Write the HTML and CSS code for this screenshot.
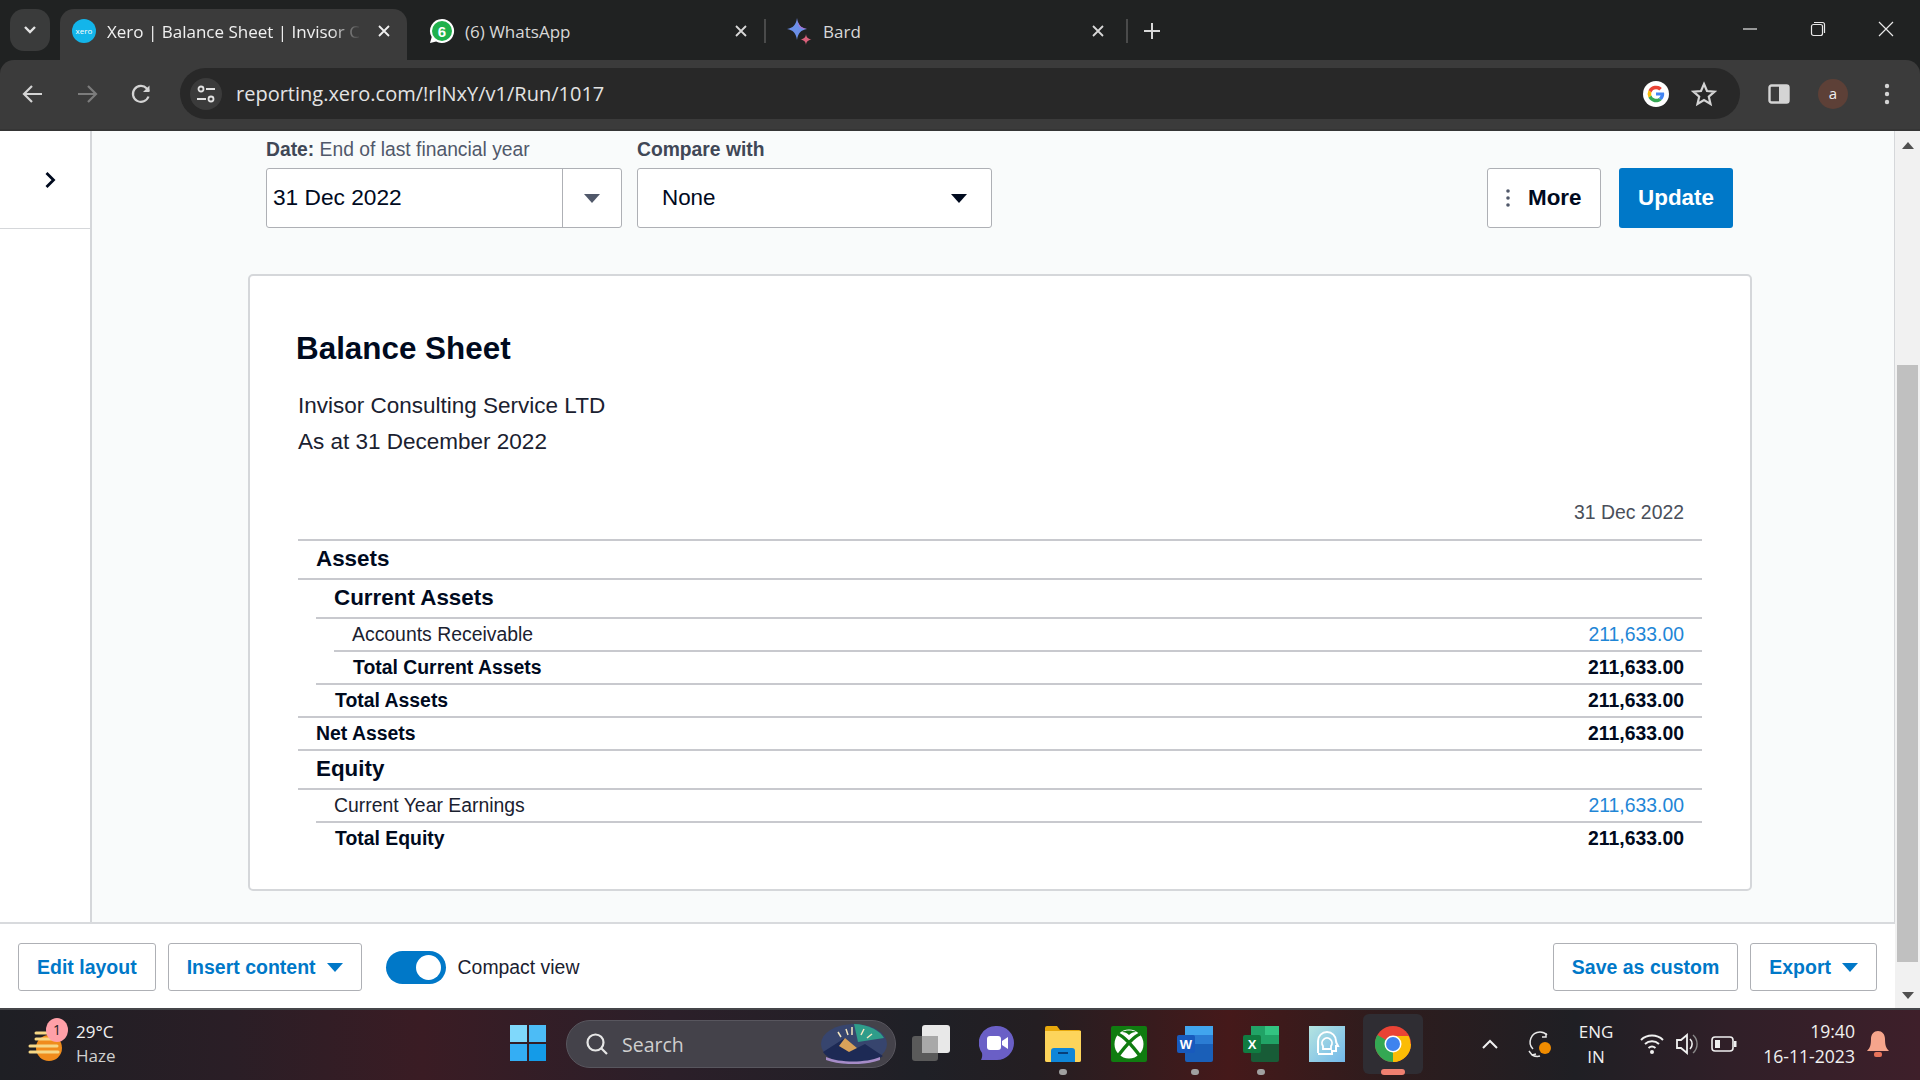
FILE: index.html
```html
<!DOCTYPE html>
<html lang="en">
<head>
    <meta charset="UTF-8">
    <title>Xero | Balance Sheet</title>
    <link rel="stylesheet" href="styles.css">
</head>
<body>
    <!-- browser tabs -->
    <div class="tabstrip">
        <div class="tab-search"><svg width="14" height="10" viewBox="0 0 14 10"><path d="M2 2l5 5 5-5" fill="none" stroke="#e3e3e3" stroke-width="2.4"/></svg></div>
        <div class="tab tab-active">
            <span class="favicon xero-icon">xero</span>
            <span class="tab-title tab-fade">Xero | Balance Sheet | Invisor C</span>
            <svg class="tab-close" width="14" height="14" viewBox="0 0 14 14"><path d="M2 2l10 10M12 2L2 12" stroke="#f0f0f0" stroke-width="1.8"/></svg>
        </div>
        <div class="tab tab-wa">
            <svg class="favicon" width="26" height="26" viewBox="0 0 26 26"><path d="M13 1a12 12 0 0 0-10.300 18.100L1 25l6.100-1.600A12 12 0 1 0 13 1z" fill="#fff"/><circle cx="13" cy="13" r="10" fill="#1fb14c"/><text x="13" y="18.500" class="wa-count">6</text></svg>
            <span class="tab-title">(6) WhatsApp</span>
            <svg class="tab-close" width="14" height="14" viewBox="0 0 14 14"><path d="M2 2l10 10M12 2L2 12" stroke="#d8d8d8" stroke-width="1.800"/></svg>
        </div>
        <div class="tab-sep"></div>
        <div class="tab tab-bard">
            <svg class="favicon" width="26" height="28" viewBox="0 0 26 28"><path d="M11 1c1 7 4 10 10 11-6 1-9 4-10 11-1-7-4-10-10-11 6-1 9-4 10-11z" fill="#6b8fe8"/><path d="M11 1c1 7 4 10 10 11-6 0-9-1-10-11z" fill="#b36fd0"/><path d="M20 17c.4 3.400 1.800 4.800 5.500 5.500-3.700.7-5.100 2.100-5.500 5.500-.4-3.400-1.800-4.800-5.500-5.500 3.700-.7 5.100-2.100 5.500-5.500z" fill="#d9607a"/></svg>
            <span class="tab-title">Bard</span>
            <svg class="tab-close" width="14" height="14" viewBox="0 0 14 14"><path d="M2 2l10 10M12 2L2 12" stroke="#d8d8d8" stroke-width="1.800"/></svg>
        </div>
        <div class="tab-sep"></div>
        <svg class="tab-new" width="18" height="18" viewBox="0 0 18 18"><path d="M9 1v16M1 9h16" stroke="#d8d8d8" stroke-width="2"/></svg>
        <div class="win-controls">
            <svg width="16" height="16" viewBox="0 0 16 16"><path d="M1 8h14" stroke="#e8e8e8" stroke-width="1.200"/></svg>
            <svg width="16" height="16" viewBox="0 0 16 16"><rect x="1.500" y="3.500" width="11" height="11" rx="2" fill="none" stroke="#e8e8e8" stroke-width="1.200"/><path d="M4 1.500h8.500a2 2 0 0 1 2 2V12" fill="none" stroke="#e8e8e8" stroke-width="1.200"/></svg>
            <svg width="16" height="16" viewBox="0 0 16 16"><path d="M1 1l14 14M15 1L1 15" stroke="#e8e8e8" stroke-width="1.200"/></svg>
        </div>
    </div>

    <!-- toolbar -->
    <div class="toolbar">
        <svg class="nav-icon" width="22" height="22" viewBox="0 0 22 22"><path d="M20 11H3M10 3l-8 8 8 8" fill="none" stroke="#d4d4d4" stroke-width="2.200"/></svg>
        <svg class="nav-icon" width="22" height="22" viewBox="0 0 22 22"><path d="M2 11h17M12 3l8 8-8 8" fill="none" stroke="#7c7c7c" stroke-width="2.200"/></svg>
        <svg class="nav-icon" width="22" height="22" viewBox="0 0 22 22"><path d="M18.500 13.500a8 8 0 1 1-1.700-8.100L19 8" fill="none" stroke="#d4d4d4" stroke-width="2.200"/><path d="M19.500 2.500v6.500H13z" fill="#d4d4d4"/></svg>
        <div class="omnibox">
            <div class="site-info"><svg width="20" height="20" viewBox="0 0 20 20"><circle cx="5" cy="5" r="2.500" fill="none" stroke="#e3e3e3" stroke-width="1.800"/><path d="M10 5h9M1 15h9" stroke="#e3e3e3" stroke-width="1.800"/><circle cx="15" cy="15" r="2.500" fill="none" stroke="#e3e3e3" stroke-width="1.800"/></svg></div>
            <span class="url">reporting.xero.com/!rlNxY/v1/Run/1017</span>
            <svg class="g-icon" width="26" height="26" viewBox="0 0 26 26"><circle cx="13" cy="13" r="13" fill="#fff"/><path d="M13 8.200a4.800 4.800 0 0 1 3.300 1.300l2.500-2.500A8.400 8.400 0 0 0 5.500 9.300l2.900 2.200A5 5 0 0 1 13 8.200z" fill="#ea4335"/><path d="M5.500 9.300a8.400 8.400 0 0 0 0 7.400l2.900-2.200a5 5 0 0 1 0-3z" fill="#fbbc05"/><path d="M5.500 16.700A8.400 8.400 0 0 0 18.700 19l-2.800-2.100a5 5 0 0 1-7.500-2.400z" fill="#34a853"/><path d="M21.200 13c0-.6-.1-1.100-.2-1.600h-8v3.200h4.600a4 4 0 0 1-1.700 2.300l2.800 2.100c1.600-1.500 2.500-3.600 2.500-6z" fill="#4285f4"/></svg>
            <svg class="star-icon" width="26" height="26" viewBox="0 0 26 26"><path d="M13 3l3 7 7.500.7-5.700 5 1.700 7.300-6.500-3.900L6.500 23l1.700-7.300-5.700-5L10 10z" fill="none" stroke="#d4d4d4" stroke-width="2.200"/></svg>
        </div>
        <svg class="panel-icon" width="22" height="22" viewBox="0 0 22 22"><rect x="1.500" y="2.500" width="19" height="17" rx="2" fill="none" stroke="#d4d4d4" stroke-width="2.400"/><rect x="11" y="2.500" width="9.500" height="17" fill="#d4d4d4"/></svg>
        <span class="avatar">a</span>
        <svg class="menu-icon" width="6" height="22" viewBox="0 0 6 22"><circle cx="3" cy="3" r="2.200" fill="#d4d4d4"/><circle cx="3" cy="11" r="2.200" fill="#d4d4d4"/><circle cx="3" cy="19" r="2.200" fill="#d4d4d4"/></svg>
    </div>

    <!-- page -->
    <div class="viewport">
        <div class="page">
            <div class="page-body">
                <aside class="sidebar">
                    <div class="sidebar-toggle"><svg width="12" height="18" viewBox="0 0 12 18"><path d="M2.500 2l7 7-7 7" fill="none" stroke="#000a1e" stroke-width="2.800"/></svg></div>
                </aside>
                <main class="main">
                    <div class="filters">
                        <div class="field field-date">
                            <div class="field-label"><b>Date:</b> End of last financial year</div>
                            <div class="select-box">
                                <span class="date-value">31 Dec 2022</span>
                                <span class="date-caret"><i class="caret caret-grey"></i></span>
                            </div>
                        </div>
                        <div class="field field-compare">
                            <div class="field-label"><b>Compare with</b></div>
                            <div class="select-box compare-box">
                                <span>None</span>
                                <i class="caret caret-dark"></i>
                            </div>
                        </div>
                        <div class="filter-actions">
                            <button class="btn-more"><svg width="4" height="20" viewBox="0 0 4 20"><circle cx="2" cy="3" r="1.800" fill="#50586a"/><circle cx="2" cy="10" r="1.800" fill="#50586a"/><circle cx="2" cy="17" r="1.800" fill="#50586a"/></svg>More</button>
                            <button class="btn-update">Update</button>
                        </div>
                    </div>

                    <section class="report">
                        <h1>Balance Sheet</h1>
                        <p class="report-sub">Invisor Consulting Service LTD</p>
                        <p class="report-sub">As at 31 December 2022</p>
                        <div class="col-head">31 Dec 2022</div>
                        <div class="row head line0 text1"><span>Assets</span></div>
                        <div class="row head line0 text2"><span>Current Assets</span></div>
                        <div class="row line1 text2"><span>Accounts Receivable</span><a>211,633.00</a></div>
                        <div class="row total line2 text1"><span>Total Current Assets</span><span>211,633.00</span></div>
                        <div class="row total line1 text1"><span>Total Assets</span><span>211,633.00</span></div>
                        <div class="row total line0 text1"><span>Net Assets</span><span>211,633.00</span></div>
                        <div class="row head line0 text1"><span>Equity</span></div>
                        <div class="row line0 text2"><span>Current Year Earnings</span><a>211,633.00</a></div>
                        <div class="row total line1 text1"><span>Total Equity</span><span>211,633.00</span></div>
                    </section>
                </main>
            </div>
            <footer class="actions">
                <button class="btn-link">Edit layout</button>
                <button class="btn-link">Insert content<i class="caret caret-blue"></i></button>
                <div class="switch"><span class="switch-knob"></span></div>
                <span class="switch-label">Compact view</span>
                <button class="btn-link btn-save">Save as custom</button>
                <button class="btn-link">Export<i class="caret caret-blue"></i></button>
            </footer>
        </div>
        <div class="scrollbar">
            <i class="arrow-up"></i>
            <div class="scroll-thumb"></div>
            <i class="arrow-down"></i>
        </div>
    </div>

    <!-- windows taskbar -->
    <div class="taskbar">
        <div class="weather">
            <div class="weather-icon">
                <svg width="38" height="46" viewBox="0 0 38 46"><circle cx="22" cy="23" r="13" fill="#f08c1c"/><path d="M9 8h12M9 14h18M3 21h27M3 27h28" stroke="#f6d785" stroke-width="3" stroke-linecap="round"/></svg>
                <span class="weather-badge">1</span>
            </div>
            <div class="weather-text"><div>29°C</div><div class="weather-sub">Haze</div></div>
        </div>
        <svg class="win-logo" width="36" height="36" viewBox="0 0 36 36"><rect width="17" height="17" fill="#7fd8fb"/><rect x="19" width="17" height="17" fill="#4cbcf6"/><rect y="19" width="17" height="17" fill="#34aef4"/><rect x="19" y="19" width="17" height="17" fill="#149be8"/></svg>
        <div class="searchbox">
            <svg width="24" height="24" viewBox="0 0 24 24"><circle cx="10.500" cy="10.500" r="8" fill="none" stroke="#e6e6e6" stroke-width="2.200"/><path d="M16 16l6 6" stroke="#e6e6e6" stroke-width="2.200"/></svg>
            <span class="search-text">Search</span>
            <svg class="search-art" width="70" height="40" viewBox="0 0 70 40"><ellipse cx="36" cy="20" rx="33" ry="20" fill="#37456e"/><path d="M36 0a33 20 0 0 1 30 14L40 18z" fill="#2f9d8a"/><path d="M5 28l22-14 12 10 8-4 18 12c-8 6-20 8-30 8S10 36 5 28z" fill="#1d2a55"/><path d="M27 14l12 10-8 4-10-6z" fill="#d9a25a"/><path d="M8 33c14 6 40 6 54 0v3c-16 6-40 5-54 0z" fill="#a68cc8"/><path d="M20 8l3 5M34 3v8M46 5l-3 6M28 5l2 6M54 10l-5 4" stroke="#f3e6c0" stroke-width="1.500"/></svg>
        </div>
        <svg class="taskview" width="38" height="36" viewBox="0 0 38 36"><rect y="11" width="26" height="25" rx="3" fill="#5a5a5a"/><rect x="10" width="28" height="28" rx="3" fill="#e8e8e8"/><rect x="10" y="11" width="16" height="17" fill="#a8a8a8"/></svg>
        <div class="apps">
            <div class="app"><svg width="36" height="38" viewBox="0 0 36 38"><path d="M18 1a17 17 0 0 1 17 17 17 17 0 0 1-17 17H2c1-2 1.500-4 1-7A17 17 0 0 1 18 1z" fill="#6a5fc6"/><rect x="8" y="11" width="14" height="14" rx="3" fill="#fff"/><path d="M23 16l6-4v12l-6-4z" fill="#fff"/></svg></div>
            <div class="app running"><svg width="36" height="36" viewBox="0 0 36 36"><path d="M0 2a2 2 0 0 1 2-2h10l3 4h19a2 2 0 0 1 2 2v28a2 2 0 0 1-2 2H2a2 2 0 0 1-2-2z" fill="#e8a80c"/><path d="M0 5h36v29a2 2 0 0 1-2 2H2a2 2 0 0 1-2-2z" fill="#fdd45b"/><path d="M6 25a3 3 0 0 1 3-3h18a3 3 0 0 1 3 3v11H6z" fill="#0f86d8"/><path d="M13 27h10" stroke="#073f7a" stroke-width="2"/></svg></div>
            <div class="app"><svg width="36" height="36" viewBox="0 0 36 36"><rect width="36" height="36" rx="2" fill="#107c10"/><circle cx="18" cy="18" r="14.500" fill="#fff"/><path d="M7 8c7 3 16 14 22 22M29 8C22 11 13 22 7 30" fill="none" stroke="#107c10" stroke-width="3.500"/><path d="M11 6c3 0 5 1 7 3 2-2 4-3 7-3-3-2-11-2-14 0z" fill="#107c10"/></svg></div>
            <div class="app running"><svg width="36" height="36" viewBox="0 0 36 36"><rect x="8" width="28" height="36" rx="2" fill="#1a5fb8"/><rect x="8" width="28" height="9" fill="#41a5ee"/><rect x="8" y="9" width="28" height="9" fill="#2b7cd3"/><rect y="9" width="18" height="18" rx="2" fill="#185abd"/><text x="9" y="23" class="doc-letter">W</text></svg></div>
            <div class="app running"><svg width="36" height="36" viewBox="0 0 36 36"><rect x="8" width="28" height="36" rx="2" fill="#185c37"/><rect x="22" width="14" height="9" fill="#33c481"/><rect x="8" width="14" height="9" fill="#21a366"/><rect x="8" y="9" width="28" height="9" fill="#21a366"/><rect y="9" width="18" height="18" rx="2" fill="#107c41"/><text x="9" y="23" class="doc-letter">X</text></svg></div>
            <div class="app"><svg width="36" height="36" viewBox="0 0 36 36"><defs><linearGradient id="gpt" x1="0" y1="0" x2="1" y2="1"><stop offset="0" stop-color="#b5e4e0"/><stop offset="1" stop-color="#72b8ea"/></linearGradient></defs><rect width="36" height="36" fill="url(#gpt)"/><path d="M9 27V15a9 9 0 0 1 18 0c0 2 1 3 2 5h-2v5h-4v3H9" fill="none" stroke="#fff" stroke-width="2"/><path d="M14 20a5 5 0 1 1 8 0v3h-8z" fill="none" stroke="#fff" stroke-width="1.800"/></svg></div>
            <div class="app app-active"><svg width="36" height="36" viewBox="0 0 36 36"><circle cx="18" cy="18" r="18" fill="#ea4335"/><path d="M18 18L2.400 9A18 18 0 0 0 18 36l8-15z" fill="#34a853"/><path d="M18 18h18a18 18 0 0 1-18 18z" fill="#fbbc05"/><path d="M18 10h15.600A18 18 0 0 1 18 36l8-14z" fill="#fbbc05"/><circle cx="18" cy="18" r="8.500" fill="#fff"/><circle cx="18" cy="18" r="7" fill="#3f83ee"/></svg></div>
        </div>
        <div class="tray">
            <svg class="tray-chevron" width="20" height="12" viewBox="0 0 20 12"><path d="M3 10l7-7 7 7" fill="none" stroke="#f0f0f0" stroke-width="2"/></svg>
            <svg class="tray-sync" width="28" height="30" viewBox="0 0 28 30"><path d="M7 20A10 10 0 0 1 14 3c3 0 5 1 7 3M20 4v4h-4" fill="none" stroke="#e8e8e8" stroke-width="1.500"/><path d="M3 22l3 4 4-1M6 26c2 1 5 2 8 1" fill="none" stroke="#e8e8e8" stroke-width="1.500"/><circle cx="19" cy="19" r="6" fill="#f08c00"/></svg>
            <div class="tray-lang"><div>ENG</div><div>IN</div></div>
            <svg class="tray-wifi" width="24" height="22" viewBox="0 0 24 22"><path d="M1 7a16 16 0 0 1 22 0M5 11a10.500 10.500 0 0 1 14 0M8.500 15a5.500 5.500 0 0 1 7 0" fill="none" stroke="#f0f0f0" stroke-width="2"/><circle cx="12" cy="19" r="2" fill="#f0f0f0"/></svg>
            <svg class="tray-vol" width="26" height="26" viewBox="0 0 26 26"><path d="M2 9h4l6-5v18l-6-5H2z" fill="none" stroke="#f0f0f0" stroke-width="1.800"/><path d="M15 8a7 7 0 0 1 0 10" fill="none" stroke="#f0f0f0" stroke-width="1.600"/><path d="M18 4a12 12 0 0 1 0 18" fill="none" stroke="#8a8a8a" stroke-width="1.400"/></svg>
            <svg class="tray-batt" width="26" height="16" viewBox="0 0 26 16"><rect x="1" y="1" width="21" height="14" rx="3" fill="none" stroke="#f0f0f0" stroke-width="1.600"/><rect x="4" y="4" width="5" height="8" fill="#f0f0f0"/><rect x="23" y="5" width="2.500" height="6" fill="#f0f0f0"/></svg>
            <div class="clock"><div>19:40</div><div>16-11-2023</div></div>
            <svg class="tray-bell" width="24" height="28" viewBox="0 0 24 28"><path d="M12 1c-4 0-7 3-7 8 0 6-1 9-4 12h22c-3-3-4-6-4-12 0-5-3-8-7-8z" fill="#f6a58c"/><rect x="8" y="22" width="8" height="5" rx="2" fill="#e8735a"/></svg>
        </div>
    </div>
</body>
</html>
```

FILE: styles.css
```css
* {
    box-sizing: border-box;
}
html, body {
    margin: 0;
    width: 1920px;
    height: 1080px;
    overflow: hidden;
}
body {
    font-family: "Liberation Sans", Arial, sans-serif;
    color: #000a1e;
    background: #202222;
}
svg {
    flex: none;
    display: block;
}

/* tabs */
.tabstrip {
    height: 60px;
    background: #202222;
    display: flex;
    align-items: flex-end;
    font-family: "Open Sans", sans-serif;
    font-size: 17px;
    color: #d8d8d8;
}
.tab-search {
    width: 40px;
    height: 42px;
    margin: 0 10px 9px 10px;
    background: #3a3b3b;
    border-radius: 14px;
    display: flex;
    align-items: center;
    justify-content: center;
}
.tab {
    width: 347px;
    height: 51px;
    padding: 0 14px 7px 12px;
    display: flex;
    align-items: center;
    border-radius: 14px 14px 0 0;
}
.tab-active {
    background: #3b3b3b;
    color: #f0f0f0;
}
.tab-wa {
    width: 355px;
    margin-left: 2px;
    padding-left: 20px;
}
.tab-wa .favicon {
    margin-right: 10px;
}
.tab-bard {
    width: 355px;
    margin-right: 5px;
    padding-left: 20px;
}
.favicon {
    width: 26px;
    margin-right: 11px;
}
.xero-icon {
    height: 24px;
    width: 24px;
    margin-right: 11px;
    border-radius: 50%;
    background: #13b5ea;
    color: #fff;
    font-size: 8px;
    line-height: 24px;
    text-align: center;
}
.wa-count {
    font-family: "Liberation Sans", sans-serif;
    font-size: 15px;
    font-weight: bold;
    fill: #fff;
    text-anchor: middle;
}
.tab-title {
    flex: 1;
    white-space: nowrap;
    overflow: hidden;
}
.tab-fade {
    margin-right: 16px;
    -webkit-mask-image: linear-gradient(to right, #000 88%, transparent 100%);
    mask-image: linear-gradient(to right, #000 88%, transparent 100%);
}
.tab-close {
    margin-right: 2px;
}
.tab-sep {
    width: 2px;
    height: 24px;
    margin-bottom: 17px;
    background: #4a4b4b;
}
.tab-new {
    margin: 0 0 20px 15px;
}
.win-controls {
    margin-left: auto;
    display: flex;
    gap: 52px;
    padding-right: 26px;
    margin-bottom: 23px;
}

/* toolbar */
.toolbar {
    height: 71px;
    background: #3b3b3b;
    border-bottom: 2px solid #353535;
    border-radius: 14px 14px 0 0;
    display: flex;
    align-items: center;
    padding: 0 0 2px 22px;
}
.nav-icon {
    margin-right: 32px;
}
.nav-icon:nth-child(3) {
    margin-right: 28px;
}
.omnibox {
    width: 1560px;
    height: 51px;
    background: #282828;
    border-radius: 26px;
    display: flex;
    align-items: center;
    padding: 0 23px 0 10px;
}
.site-info {
    width: 32px;
    height: 32px;
    margin-right: 14px;
    background: #3b3b3b;
    border-radius: 50%;
    display: flex;
    align-items: center;
    justify-content: center;
}
.url {
    font-family: "Open Sans", sans-serif;
    font-size: 20px;
    color: #e3e3e3;
}
.g-icon {
    margin-left: auto;
}
.star-icon {
    margin-left: 22px;
}
.panel-icon {
    margin-left: 28px;
}
.avatar {
    width: 30px;
    height: 30px;
    margin-left: 28px;
    border-radius: 50%;
    background: #5d4037;
    color: #f0f0f0;
    font-family: "Open Sans", sans-serif;
    font-size: 15px;
    line-height: 28px;
    text-align: center;
}
.menu-icon {
    margin-left: 36px;
}

/* page */
.viewport {
    height: 877px;
    display: flex;
    background: #fff;
}
.page {
    width: 1895px;
    display: flex;
    flex-direction: column;
}
.page-body {
    height: 793px;
    display: flex;
    border-bottom: 2px solid #d8dadd;
}
.sidebar {
    width: 92px;
    background: #fff;
    border-right: 2px solid #d5d7da;
}
.sidebar-toggle {
    height: 98px;
    padding-left: 10px;
    border-bottom: 1px solid #d5d7da;
    display: flex;
    align-items: center;
    justify-content: center;
}
.main {
    width: 1803px;
    background: #f9fbfb;
    border-right: 1px solid #d5d7da;
    padding: 7px 0 0 0;
}
.filters {
    display: flex;
    align-items: flex-end;
    padding: 0 161px 0 174px;
}
.field-label {
    font-size: 19.3px;
    line-height: 24px;
    margin-bottom: 6px;
    color: #50586a;
}
.field-label b {
    color: #404756;
}
.field-date {
    width: 356px;
}
.field-compare {
    width: 355px;
    margin-left: 15px;
}
.select-box {
    height: 60px;
    background: #fff;
    border: 1px solid #aeb0b5;
    border-radius: 3px;
    display: flex;
    align-items: center;
    font-size: 22.4px;
}
.date-value {
    flex: 1;
    padding: 0 0 2px 6px;
    font-size: 22.7px;
}
.date-caret {
    width: 59px;
    height: 100%;
    border-left: 1px solid #aeb0b5;
    display: flex;
    align-items: center;
    justify-content: center;
}
.compare-box {
    justify-content: space-between;
    padding: 0 24px 0 24px;
}
.caret {
    display: inline-block;
    border-left: 8px solid transparent;
    border-right: 8px solid transparent;
    border-top: 9px solid;
}
.caret-grey {
    color: #50586a;
}
.caret-dark {
    color: #000a1e;
}
.caret-blue {
    color: #0078c8;
    margin-left: 11px;
    vertical-align: 2px;
}
.filter-actions {
    margin-left: auto;
    display: flex;
    gap: 18px;
}
button {
    font-family: "Liberation Sans", Arial, sans-serif;
    font-weight: bold;
    cursor: pointer;
}
.btn-more {
    width: 114px;
    height: 60px;
    background: #fff;
    border: 1px solid #aeb0b5;
    border-radius: 3px;
    color: #000a1e;
    font-size: 22.4px;
    display: flex;
    align-items: center;
    gap: 18px;
    padding: 0 0 0 18px;
}
.btn-update {
    width: 114px;
    height: 60px;
    background: #0078c8;
    border: none;
    border-radius: 3px;
    color: #fff;
    font-size: 22.4px;
}

/* report card */
.report {
    width: 1504px;
    height: 617px;
    margin: 46px 0 0 156px;
    padding: 53px 48px 0 48px;
    background: #fff;
    border: 2px solid #d5d7da;
    border-radius: 5px;
}
.report h1 {
    margin: 0 0 19px -2px;
    font-size: 31.4px;
    line-height: 40px;
}
.report-sub {
    margin: 0;
    font-size: 22.5px;
    line-height: 36px;
    color: #1a2130;
}
.col-head {
    height: 79px;
    padding: 40px 18px 0 0;
    font-size: 19.4px;
    line-height: 24px;
    text-align: right;
    color: #4a4f5a;
}
.row {
    height: 33px;
    display: flex;
    align-items: center;
    justify-content: space-between;
    padding-right: 18px;
    border-top: 2px solid #c8c9ce;
    font-size: 19.4px;
    color: #1a2130;
}
.row a {
    color: #1f86d6;
}
.head {
    height: 39px;
    padding-bottom: 2px;
    font-size: 22.4px;
    font-weight: bold;
    color: #000a1e;
}
.total {
    font-weight: bold;
    color: #000a1e;
}
.line1 {
    margin-left: 18px;
}
.line2 {
    margin-left: 36px;
}
.text1 {
    padding-left: 18px;
}
.text2 {
    padding-left: 36px;
}
.line1.text1, .line2.text1 {
    padding-left: 19px;
}

/* footer buttons */
.actions {
    height: 84px;
    padding: 2px 18px 0 18px;
    background: #fff;
    display: flex;
    align-items: center;
}
.btn-link {
    height: 48px;
    padding: 0 18px;
    background: #fff;
    border: 1px solid #aeb0b5;
    border-radius: 3px;
    color: #0078c8;
    font-size: 19.5px;
    margin-right: 12px;
    white-space: nowrap;
}
.switch {
    width: 60px;
    height: 33px;
    margin-left: 12px;
    background: #0078c8;
    border-radius: 17px;
    padding: 4px 0 0 30px;
}
.switch-knob {
    display: block;
    width: 25px;
    height: 25px;
    background: #fff;
    border-radius: 50%;
}
.switch-label {
    margin-left: 12px;
    font-size: 19.4px;
    color: #1a2130;
}
.btn-save {
    margin-left: auto;
}
.actions .btn-link:last-child {
    margin-right: 0;
}
.scrollbar {
    width: 25px;
    background: #f1f1f1;
    display: flex;
    flex-direction: column;
    align-items: center;
}
.arrow-up, .arrow-down {
    border-left: 6px solid transparent;
    border-right: 6px solid transparent;
}
.arrow-up {
    border-bottom: 7px solid #505050;
    margin-top: 11px;
}
.arrow-down {
    border-top: 7px solid #505050;
    margin-top: 30px;
}
.scroll-thumb {
    width: 21px;
    height: 597px;
    margin-top: 216px;
    background: #c0c0c0;
}

/* taskbar */
.taskbar {
    height: 72px;
    padding-bottom: 2px;
    border-top: 2px solid #45464a;
    background: linear-gradient(to right, #1e1f24 0%, #2a1e26 12%, #3a1c24 22%, #2b1f29 35%, #1f2026 48%, #241e22 54%, #45191a 64%, #2e1c1d 72%, #1f1f24 82%, #301f28 90%, #3e1f2a 100%);
    display: flex;
    align-items: center;
    font-family: "Open Sans", sans-serif;
    color: #f0f0f0;
    font-size: 17px;
}
.weather {
    width: 510px;
    display: flex;
    align-items: center;
    padding-left: 27px;
}
.weather-icon {
    position: relative;
    width: 38px;
    height: 46px;
    margin-top: 8px;
}
.weather-badge {
    position: absolute;
    left: 19px;
    top: -7px;
    width: 22px;
    height: 24px;
    border-radius: 50%;
    background: #ffa0a8;
    color: #222;
    font-size: 14px;
    line-height: 24px;
    text-align: center;
}
.weather-text {
    margin-left: 11px;
    line-height: 24px;
}
.weather-sub {
    color: #cfcfcf;
}
.win-logo {
    margin-top: -2px;
}
.searchbox {
    width: 330px;
    height: 48px;
    margin-left: 20px;
    padding: 0 7px 0 18px;
    background: #44424a;
    border: 1px solid #58565e;
    border-radius: 24px;
    display: flex;
    align-items: center;
}
.search-text {
    margin-left: 13px;
    font-size: 19.5px;
    color: #cfcfcf;
}
.search-art {
    margin-left: auto;
}
.taskview {
    margin-left: 16px;
    margin-top: -2px;
}
.apps {
    margin-left: 17px;
    display: flex;
    gap: 6px;
}
.app {
    width: 60px;
    height: 60px;
    border-radius: 6px;
    display: flex;
    align-items: center;
    justify-content: center;
    position: relative;
}
.running::after {
    content: "";
    position: absolute;
    left: 26px;
    bottom: -1px;
    width: 8px;
    height: 6px;
    border-radius: 3px;
    background: #a0a0a0;
}
.app-active {
    background: #2f2d33;
}
.app-active::after {
    content: "";
    position: absolute;
    left: 18px;
    bottom: -1px;
    width: 24px;
    height: 6px;
    border-radius: 3px;
    background: #f08070;
}
.tray {
    flex: 1;
    display: flex;
    align-items: center;
}
.tray-chevron {
    margin-left: 57px;
}
.tray-sync {
    margin-left: 26px;
}
.tray-lang {
    margin-left: 24px;
    width: 36px;
    line-height: 25px;
    text-align: center;
}
.tray-wifi {
    margin-left: 26px;
}
.tray-vol {
    margin-left: 11px;
}
.tray-batt {
    margin-left: 10px;
}
.clock {
    margin-left: 24px;
    width: 94px;
    line-height: 25px;
    font-size: 17.6px;
    text-align: right;
    white-space: nowrap;
}
.tray-bell {
    margin-left: 11px;
}
.doc-letter {
    font-family: "Liberation Sans", sans-serif;
    font-size: 13px;
    font-weight: bold;
    fill: #fff;
    text-anchor: middle;
}
```
